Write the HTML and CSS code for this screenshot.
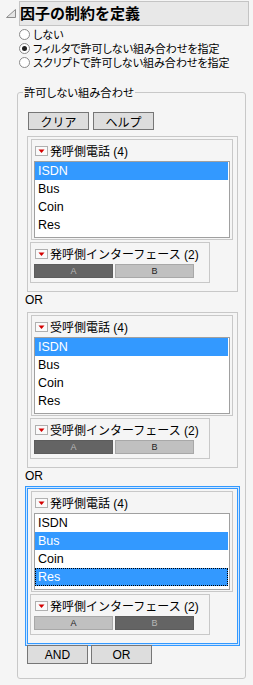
FILE: index.html
```html
<!DOCTYPE html>
<html lang="ja">
<head>
  <meta charset="UTF-8" />
  <meta name="viewport" content="width=device-width, initial-scale=1.0"/>
  <title>因子の制約を定義</title>
  <link rel="stylesheet" href="styles.css">
</head>
<body>

  <div class="outline-head">
    <svg class="disclose" width="10" height="9" viewBox="0 0 10 9"><polygon points="0.5,8.5 9.5,0.5 9.5,8.5" fill="#e4e4e4" stroke="#8c8c8c"/></svg>
    <div class="outline-title">因子の制約を定義</div>
  </div>

  <div class="choices">
    <label class="choice"><span class="radio"></span>しない</label>
    <label class="choice"><span class="radio on"></span>フィルタで許可しない組み合わせを指定</label>
    <label class="choice"><span class="radio"></span>スクリプトで許可しない組み合わせを指定</label>
  </div>

  <fieldset class="group">
    <legend>許可しない組み合わせ</legend>

    <div class="btn-row top">
      <button>クリア</button>
      <button>ヘルプ</button>
    </div>

    <!-- 条件 1 -->
    <div class="clause">
      <div class="panel list-panel">
        <div class="panel-head">
          <svg class="menu" width="13" height="10" viewBox="0 0 13 10"><rect x="0.5" y="0.5" width="12" height="9" fill="#fafafa" stroke="#b0b0b0"/><path d="M3.5 3.5h6l-3 3.5z" fill="#d40000"/></svg>
          <span>発呼側電話 (4)</span>
        </div>
        <ul class="listbox">
          <li class="sel">ISDN</li>
          <li>Bus</li>
          <li>Coin</li>
          <li>Res</li>
        </ul>
      </div>
      <div class="panel iface-panel">
        <div class="panel-head">
          <svg class="menu" width="13" height="10" viewBox="0 0 13 10"><rect x="0.5" y="0.5" width="12" height="9" fill="#fafafa" stroke="#b0b0b0"/><path d="M3.5 3.5h6l-3 3.5z" fill="#d40000"/></svg>
          <span>発呼側インターフェース (2)</span>
        </div>
        <div class="bars">
          <span class="bar on">A</span>
          <span class="bar">B</span>
        </div>
      </div>
    </div>

    <div class="or">OR</div>

    <!-- 条件 2 -->
    <div class="clause">
      <div class="panel list-panel">
        <div class="panel-head">
          <svg class="menu" width="13" height="10" viewBox="0 0 13 10"><rect x="0.5" y="0.5" width="12" height="9" fill="#fafafa" stroke="#b0b0b0"/><path d="M3.5 3.5h6l-3 3.5z" fill="#d40000"/></svg>
          <span>受呼側電話 (4)</span>
        </div>
        <ul class="listbox">
          <li class="sel">ISDN</li>
          <li>Bus</li>
          <li>Coin</li>
          <li>Res</li>
        </ul>
      </div>
      <div class="panel iface-panel">
        <div class="panel-head">
          <svg class="menu" width="13" height="10" viewBox="0 0 13 10"><rect x="0.5" y="0.5" width="12" height="9" fill="#fafafa" stroke="#b0b0b0"/><path d="M3.5 3.5h6l-3 3.5z" fill="#d40000"/></svg>
          <span>受呼側インターフェース (2)</span>
        </div>
        <div class="bars">
          <span class="bar on">A</span>
          <span class="bar">B</span>
        </div>
      </div>
    </div>

    <div class="or">OR</div>

    <!-- 条件 3 (選択中) -->
    <div class="clause active">
      <div class="panel list-panel">
        <div class="panel-head">
          <svg class="menu" width="13" height="10" viewBox="0 0 13 10"><rect x="0.5" y="0.5" width="12" height="9" fill="#fafafa" stroke="#b0b0b0"/><path d="M3.5 3.5h6l-3 3.5z" fill="#d40000"/></svg>
          <span>発呼側電話 (4)</span>
        </div>
        <ul class="listbox">
          <li>ISDN</li>
          <li class="sel">Bus</li>
          <li>Coin</li>
          <li class="sel focus">Res</li>
        </ul>
      </div>
      <div class="panel iface-panel">
        <div class="panel-head">
          <svg class="menu" width="13" height="10" viewBox="0 0 13 10"><rect x="0.5" y="0.5" width="12" height="9" fill="#fafafa" stroke="#b0b0b0"/><path d="M3.5 3.5h6l-3 3.5z" fill="#d40000"/></svg>
          <span>発呼側インターフェース (2)</span>
        </div>
        <div class="bars">
          <span class="bar">A</span>
          <span class="bar on">B</span>
        </div>
      </div>
    </div>

    <div class="btn-row bottom">
      <button>AND</button>
      <button>OR</button>
    </div>
  </fieldset>

</body>
</html>
```

FILE: styles.css
```css
* { margin: 0; padding: 0; box-sizing: border-box; }
body {
  font-family: 'Liberation Sans', 'Noto Sans CJK JP', sans-serif;
  font-size: 12px;
  background: #f5f5f5;
  color: #000;
  width: 253px;
}

/* アウトライン見出し */
.outline-head {
  display: flex;
  align-items: center;
  height: 26px;
  padding-top: 1px;
}

.disclose {
  margin: 0 3px 0 6px;
}

.outline-title {
  width: 230px;
  height: 25px;
  border: 1px solid #c4c4c4;
  background: #e8e8e8;
  font-family: 'Noto Sans CJK JP', sans-serif;
  font-size: 15px;
  font-weight: bold;
  line-height: 22px;
}

/* ラジオボタン */
.choices {
  padding: 1px 0 0 19px;
}

.choice {
  display: flex;
  align-items: center;
  gap: 3px;
  height: 14px;
  line-height: 14px;
  font-family: 'Noto Sans CJK JP', sans-serif;
  font-size: 11px;
  font-feature-settings: "palt";
  color: #000;
}

.radio {
  position: relative;
  flex: none;
  width: 11px;
  height: 11px;
  border: 1px solid #8a8a8a;
  border-radius: 50%;
  background: #fff;
}

.radio.on::after {
  content: "";
  position: absolute;
  left: 2px;
  top: 2px;
  width: 5px;
  height: 5px;
  border-radius: 50%;
  background: #222;
}

/* グループボックス */
.group {
  margin: 16px 7px 0 17px;
  padding: 13px 7px 14px 9px;
  border: 1px solid #c8c8c8;
  border-radius: 3px;
  min-width: 0;
}

.group legend {
  margin-left: -4px;
  padding: 0 1px;
  line-height: 14px;
  font-family: 'Noto Sans CJK JP', sans-serif;
  font-size: 11.3px;
  font-feature-settings: "palt";
}

.btn-row {
  display: flex;
}

.btn-row.top {
  gap: 4px;
  margin: 0 0 6px 1px;
}

.btn-row.bottom {
  gap: 3px;
  margin-top: 1px;
}

button {
  width: 61px;
  height: 18px;
  border: 1px solid #767676;
  background: #dddddd;
  font-family: 'Liberation Sans', 'Noto Sans CJK JP', sans-serif;
  font-size: 12px;
  color: #000;
}

.btn-row.bottom button {
  height: 19px;
}

/* 条件ブロック */
.clause {
  padding: 2px 4px 8px 3px;
  border: 1px solid #c8c8c8;
}

.clause.active {
  border-color: #3399ff;
  box-shadow: 0 0 0 1px #cfe6ff, 0 0 0 2px #3399ff;
}

.panel {
  border: 1px solid #c8c8c8;
}

.panel-head {
  display: flex;
  align-items: center;
  gap: 2px;
  height: 21px;
  padding-left: 3px;
  font-size: 12px;
  white-space: nowrap;
}

.listbox {
  margin: 0 2px 1px 2px;
  padding: 0 1px 3px 0;
  border: 1px solid #a0a0a0;
  background: #fff;
  list-style: none;
}

.listbox li {
  height: 18px;
  padding-left: 3px;
  line-height: 18px;
  font-size: 12.5px;
}

.listbox li.sel {
  background: #3399ff;
  color: #fff;
}

.listbox li.focus {
  outline: 1px dotted #000;
  outline-offset: -1px;
}

.iface-panel {
  width: 180px;
  margin: 2px 0 0 -1px;
}

.iface-panel .panel-head {
  padding-left: 4px;
}

.bars {
  display: flex;
  gap: 2px;
  padding: 0 0 4px 3px;
}

.bar {
  display: flex;
  align-items: center;
  justify-content: center;
  width: 79px;
  height: 14px;
  border: 1px solid #a8a8a8;
  background: #c0c0c0;
  font-size: 9px;
  color: #222;
}

.bar.on {
  border-color: #5c5c5c;
  background: #646464;
  color: #b8b8b8;
}

.or {
  height: 20px;
  margin-left: -2px;
  line-height: 17px;
  font-size: 12px;
}
```
